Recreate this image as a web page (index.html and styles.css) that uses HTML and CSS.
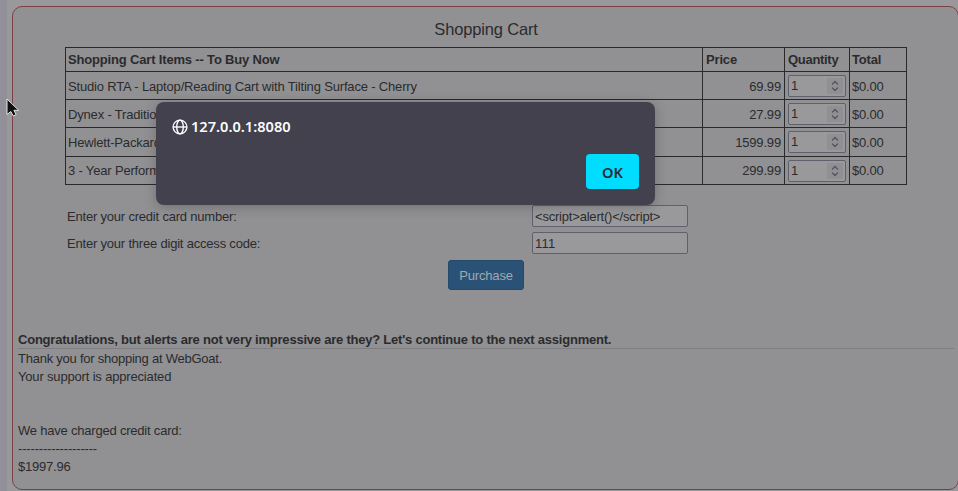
FILE: index.html
```html
<!DOCTYPE html>
<html lang="en">
<head>
<meta charset="utf-8">
<title>Shopping Cart</title>
<link rel="stylesheet" href="styles.css">
</head>
<body>
<main class="lesson">
  <h1 class="title">Shopping Cart</h1>
  <table class="cart">
    <colgroup><col class="c-item"><col class="c-price"><col class="c-qty"><col class="c-total"></colgroup>
    <tr class="head"><th>Shopping Cart Items -- To Buy Now</th><th>Price</th><th>Quantity</th><th>Total</th></tr>
    <tr><td>Studio RTA - Laptop/Reading Cart with Tilting Surface - Cherry</td><td class="num">69.99</td><td><div class="qty">1<span class="spin"><svg viewBox="0 0 16 16"><path d="M5.5 6 8 3.5 10.5 6M5.5 10 8 12.5 10.5 10"/></svg></span></div></td><td>$0.00</td></tr>
    <tr><td>Dynex - Traditio</td><td class="num">27.99</td><td><div class="qty">1<span class="spin"><svg viewBox="0 0 16 16"><path d="M5.5 6 8 3.5 10.5 6M5.5 10 8 12.5 10.5 10"/></svg></span></div></td><td>$0.00</td></tr>
    <tr class="tall"><td>Hewlett-Packard</td><td class="num">1599.99</td><td><div class="qty">1<span class="spin"><svg viewBox="0 0 16 16"><path d="M5.5 6 8 3.5 10.5 6M5.5 10 8 12.5 10.5 10"/></svg></span></div></td><td>$0.00</td></tr>
    <tr><td>3 - Year Perform</td><td class="num">299.99</td><td><div class="qty">1<span class="spin"><svg viewBox="0 0 16 16"><path d="M5.5 6 8 3.5 10.5 6M5.5 10 8 12.5 10.5 10"/></svg></span></div></td><td>$0.00</td></tr>
  </table>
  <div class="form">
    <label for="card">Enter your credit card number:</label><input id="card" value="&lt;script&gt;alert()&lt;/script&gt;">
    <label for="code">Enter your three digit access code:</label><input id="code" class="digits" value="111">
  </div>
  <button class="purchase">Purchase</button>
  <p class="feedback">Congratulations, but alerts are not very impressive are they? Let's continue to the next assignment.</p>
  <div class="output"><span class="thanks">Thank you for shopping at WebGoat.</span><br>Your support is appreciated<br><br><br><span class="charged">We have charged credit card:</span><br><span>-------------------</span><br><span class="charged">$1997.96</span></div>
</main>
<div class="dialog" role="alertdialog">
  <div class="origin">
    <svg class="globe" viewBox="0 0 16 16"><circle cx="8" cy="8" r="6.9"/><ellipse cx="8" cy="8" rx="3.3" ry="6.9"/><path d="M1 8h14"/></svg>
    <span class="host">127.0.0.1:8080</span>
  </div>
  <button class="ok">OK</button>
</div>
<svg class="pointer" viewBox="0 0 14 20"><path d="M1 1v15.5l3.8-3 2.4 4.5 3-1.4-2.3-4.3h4.8z"/></svg>
</body>
</html>
```
FILE: styles.css
```css
* { box-sizing: border-box; }
body {
  margin: 0;
  height: 491px;
  overflow: hidden;
  padding: 6px 0 0 12px;
  background: linear-gradient(90deg, #919098 7px, #99999b 7px);
  font: 13px/18px "Liberation Sans", Arial, sans-serif;
  letter-spacing: -0.17px;
  color: #2b2b2d;
}
.lesson {
  width: 947px;
  height: 484px;
  padding: 12px 4px 0 5px;
  border: 1px solid #7b4147;
  border-radius: 10px;
  background: #919193;
}
.title {
  margin: 0 0 7px;
  height: 21px;
  font-size: 16.5px;
  line-height: 21px;
  font-weight: 400;
  text-align: center;
}
.cart {
  width: 842px;
  margin-left: 47px;
  border-collapse: separate;
  border-spacing: 0;
  table-layout: fixed;
  border-top: 1px solid #29292b;
  border-left: 1px solid #29292b;
}
.c-item { width: 637px; }
.c-price { width: 82px; }
.c-qty { width: 65px; }
.c-total { width: 57px; }
.cart th, .cart td {
  height: 28px;
  padding: 2px 3px 0;
  border-right: 1px solid #29292b;
  border-bottom: 1px solid #29292b;
  text-align: left;
  vertical-align: middle;
  white-space: nowrap;
}
.cart th:first-child, .cart td:first-child,
.cart th:last-child, .cart td:last-child { padding-left: 2px; }
.cart .head th { height: 24px; padding-top: 0; }
.cart .head th:nth-child(3) { letter-spacing: -0.3px; }
.cart .tall td { height: 29px; padding-top: 1px; }
.cart tr:last-child td { padding-top: 0; }
.cart .num { text-align: right; }
.cart td:nth-child(3) { padding-top: 0; }
.cart .tall td:nth-child(3) { padding-top: 0; padding-bottom: 1px; }
.qty {
  display: flex;
  align-items: center;
  justify-content: space-between;
  width: 58px;
  height: 22px;
  padding: 0 2px;
  border: 1px solid #605f6b;
  border-radius: 2px;
  background: #99999b;
  line-height: 20px;
}
.spin { width: 16px; height: 16px; background: #8f8f94; }
.spin svg { display: block; fill: none; stroke: #55555d; stroke-width: 1.3; stroke-linecap: round; }
.form {
  display: grid;
  grid-template-columns: 465px 156px;
  grid-auto-rows: 22px;
  row-gap: 5px;
  align-items: center;
  margin: 20px 0 0 49px;
}
.form label { padding-top: 1px; letter-spacing: -0.2px; }
.form input {
  width: 156px;
  height: 22px;
  padding: 0 2px;
  border: 1px solid #605f6b;
  border-radius: 2px;
  background: #99999b;
  color: inherit;
  font: inherit;
  letter-spacing: -0.2px;
}
.form .digits { letter-spacing: 0.2px; }
.purchase {
  display: block;
  width: 76px;
  height: 30px;
  margin: 6px 0 0 430px;
  padding: 1px 0 0;
  border: 1px solid #23496b;
  border-radius: 3px;
  background: #2a5277;
  color: #a2a8ad;
  font: inherit;
  letter-spacing: -0.17px;
}
.feedback {
  margin: 40px 0 0;
  padding-top: 1px;
  height: 19px;
  line-height: 17px;
  border-bottom: 1px solid #7e7e80;
  font-weight: 700;
  letter-spacing: -0.225px;
}
.output { margin-top: 1px; }
.thanks { letter-spacing: -0.24px; }
.charged { letter-spacing: -0.21px; }
.dialog {
  position: absolute;
  left: 156px;
  top: 102px;
  display: flex;
  flex-direction: column;
  justify-content: space-between;
  width: 499px;
  height: 103px;
  padding: 15px 16px 16px;
  border-radius: 8px;
  background: #42414d;
  box-shadow: 0 2px 12px rgba(30, 30, 35, .28);
  color: #fbfbfe;
  font: 600 14px/18px "Noto Sans", sans-serif;
  letter-spacing: 0;
}
.origin { display: flex; align-items: center; gap: 3px; height: 18px; }
.globe { width: 16px; height: 16px; margin-top: 1px; fill: none; stroke: #fbfbfe; stroke-width: 1.4; }
.host { font-size: 14.6px; line-height: 18px; }
.ok {
  align-self: flex-end;
  width: 53px;
  height: 35px;
  padding: 0;
  border: 0;
  border-radius: 4px;
  background: #00ddff;
  color: #2b2a33;
  font: 600 14.6px/18px "Noto Sans", sans-serif;
}
.pointer {
  position: absolute;
  left: 6px;
  top: 98px;
  width: 14px;
  height: 20px;
  fill: #111;
  stroke: #e4e4e6;
  stroke-width: 1;
}
```
